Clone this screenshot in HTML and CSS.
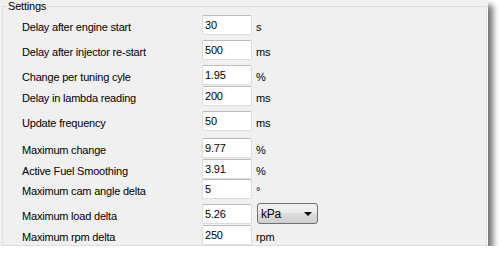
FILE: index.html
```html
<!DOCTYPE html>
<html lang="en">
<head>
    <meta charset="UTF-8">
    <title>Settings</title>
    <link rel="stylesheet" href="styles.css">
</head>
<body>
    <div class="window">
        <fieldset class="group">
            <legend>Settings</legend>
            <div class="row r1">
                <label>Delay after engine start</label>
                <input type="text" value="30">
                <span class="unit">s</span>
            </div>
            <div class="row r2">
                <label>Delay after injector re-start</label>
                <input type="text" value="500">
                <span class="unit">ms</span>
            </div>
            <div class="row r3">
                <label>Change per tuning cyle</label>
                <input type="text" value="1.95">
                <span class="unit">%</span>
            </div>
            <div class="row r4">
                <label>Delay in lambda reading</label>
                <input type="text" value="200">
                <span class="unit">ms</span>
            </div>
            <div class="row r5">
                <label>Update frequency</label>
                <input type="text" value="50">
                <span class="unit">ms</span>
            </div>
            <div class="row r6">
                <label>Maximum change</label>
                <input type="text" value="9.77">
                <span class="unit">%</span>
            </div>
            <div class="row r7">
                <label>Active Fuel Smoothing</label>
                <input type="text" value="3.91">
                <span class="unit">%</span>
            </div>
            <div class="row r8">
                <label>Maximum cam angle delta</label>
                <input type="text" value="5">
                <span class="unit">°</span>
            </div>
            <div class="row r9">
                <label>Maximum load delta</label>
                <input type="text" value="5.26">
                <div class="combo">
                    <span>kPa</span>
                    <span class="arrow"></span>
                </div>
            </div>
            <div class="row r10">
                <label>Maximum rpm delta</label>
                <input type="text" value="250">
                <span class="unit">rpm</span>
            </div>
        </fieldset>
    </div>
</body>
</html>
```

FILE: styles.css
```css
body {
    margin: 0;
    background: #fff;
    font-family: "Liberation Sans", Arial, sans-serif;
    font-size: 11px;
    letter-spacing: -0.2px;
    color: #000;
}
.window {
    width: 488px;
    height: 246px;
    background: #f0f0f0;
    box-shadow: 5px 5px 6px rgba(0, 0, 0, 0.55);
    overflow: hidden;
}
.group {
    margin: 0 0 0 2px;
    padding: 0;
    width: 485px;
    box-sizing: border-box;
    border: 1px solid #d5dfe5;
    box-shadow: 1px 1px 0 #fff;
}
.group legend {
    margin-left: 4px;
    padding: 0 1px;
    line-height: 13px;
    height: 13px;
}
.row {
    display: flex;
    align-items: center;
    height: 20px;
}
.row label {
    flex: 0 0 199px;
    box-sizing: border-box;
    padding: 3px 0 0 19px;
}
.row input {
    width: 50px;
    height: 20px;
    box-sizing: border-box;
    margin: 0;
    padding: 0 2px;
    border: 1px solid #d9dde2;
    border-top-color: #b9bcc2;
    border-radius: 2px;
    background: #fff;
    font: inherit;
    letter-spacing: inherit;
    color: #000;
    outline: none;
}
.unit {
    margin-left: 4px;
    padding-top: 3px;
}
.r1 { margin-top: 2px; }
.r2 { margin-top: 5px; }
.r3 { margin-top: 5px; }
.r4 { margin-top: 1px; }
.r5 { margin-top: 5px; }
.r6 { margin-top: 7px; }
.r7 { margin-top: 1px; }
.r8 { margin-top: 0; }
.r9 { margin-top: 5px; }
.r10 { margin-top: 1px; }
.combo {
    display: flex;
    align-items: center;
    justify-content: space-between;
    width: 61px;
    height: 21px;
    box-sizing: border-box;
    margin: -1px 0 0 5px;
    padding: 0 5px 0 3px;
    border: 1px solid #707070;
    border-radius: 3px;
    background: linear-gradient(#f2f2f2, #ebebeb 45%, #dddddd 50%, #cfcfcf);
    font-size: 12px;
}
.arrow {
    width: 0;
    height: 0;
    border-left: 4px solid transparent;
    border-right: 4px solid transparent;
    border-top: 4px solid #000;
}
```
